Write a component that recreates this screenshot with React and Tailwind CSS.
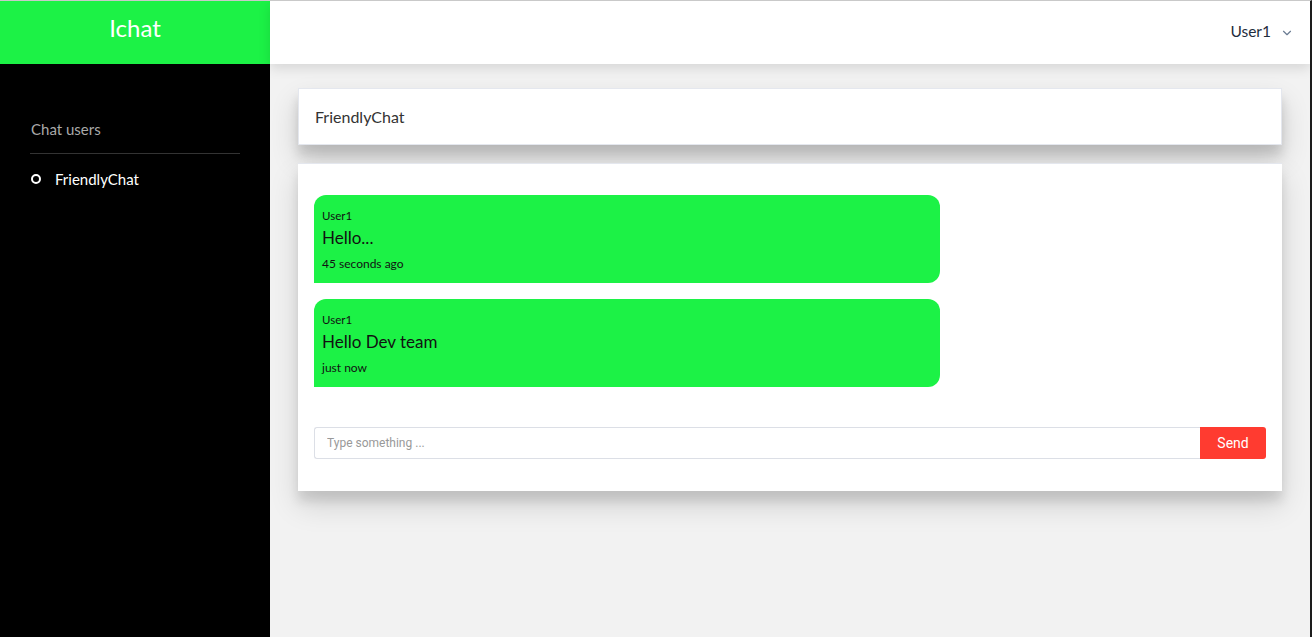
import { ChevronDown } from 'lucide-react';

const messages = [
  { user: 'User1', text: 'Hello...', time: '45 seconds ago' },
  { user: 'User1', text: 'Hello Dev team', time: 'just now' },
];

function Sidebar() {
  return (
    <aside className="w-[270px] shrink-0 bg-black flex flex-col">
      <div className="h-[63px] bg-[#1cf246] flex items-center justify-center">
        <span className="text-white text-[24px] pb-[10px]">Ichat</span>
      </div>
      <div className="px-[30px] pt-[54px]">
        <div className="text-[#a9a9a9] text-[15px] pb-[12px] pl-px border-b border-[#333]">Chat users</div>
        <div className="flex items-center gap-[14px] pt-[14px] pl-px">
          <span className="w-[10px] h-[10px] rounded-full border-2 border-white" />
          <span className="text-white text-[15px]">FriendlyChat</span>
        </div>
      </div>
    </aside>
  );
}

function Bubble({ user, text, time }) {
  return (
    <div className="w-[626px] h-[88px] bg-[#1cf246] rounded-t-[12px] rounded-br-[12px] px-2 pt-[14px] text-[#111]">
      <div className="text-[11.5px] leading-[14px]">{user}</div>
      <div className="text-[17px] leading-[20px] mt-[5px]">{text}</div>
      <div className="text-[12px] leading-[14px] mt-[9px]">{time}</div>
    </div>
  );
}

export default function App() {
  return (
    <div className="w-[1312px] h-[637px] flex overflow-hidden border-t border-[#c9c9c9] border-r-2 border-r-[#1d1d1d] font-['Lato',sans-serif]">
      <Sidebar />
      <div className="flex-1 flex flex-col bg-[#f2f2f2]">
        <header className="h-[63px] bg-white flex items-center justify-end pr-[16px] shadow-[0_4px_12px_rgba(0,0,0,0.12)] relative z-10">
          <span className="text-[#1f2d3d] text-[15.5px] pb-[2px]">User1</span>
          <ChevronDown className="w-[14px] h-[14px] text-[#6b7c93] ml-[9px]" strokeWidth={2} />
        </header>
        <main className="flex-1 px-[28px] pt-[24px] flex flex-col gap-[18px]">
          <div className="h-[57px] bg-white border border-[#e4e7ee] flex items-center px-[16px] shadow-[0_14px_28px_rgba(0,0,0,0.16),0_10px_10px_rgba(0,0,0,0.12)]">
            <span className="text-[#333] text-[16px]">FriendlyChat</span>
          </div>
          <div className="bg-white border-t border-[#e4e7ee] px-[16px] pt-[31px] pb-[32px] shadow-[0_14px_28px_rgba(0,0,0,0.14),0_10px_10px_rgba(0,0,0,0.1)]">
            <div className="flex flex-col gap-[16px]">
              {messages.map((m, i) => (
                <Bubble key={i} {...m} />
              ))}
            </div>
            <div className="flex mt-[40px] h-[32px] font-['Roboto',sans-serif]">
              <input
                className="flex-1 border border-[#dcdfe6] border-r-0 rounded-l-[3px] px-[12px] text-[12px] text-[#333] placeholder:text-[#999] outline-none"
                placeholder="Type something ..."
              />
              <button className="w-[66px] bg-[#ff3b30] text-white text-[14px] rounded-r-[3px]">Send</button>
            </div>
          </div>
        </main>
      </div>
    </div>
  );
}
